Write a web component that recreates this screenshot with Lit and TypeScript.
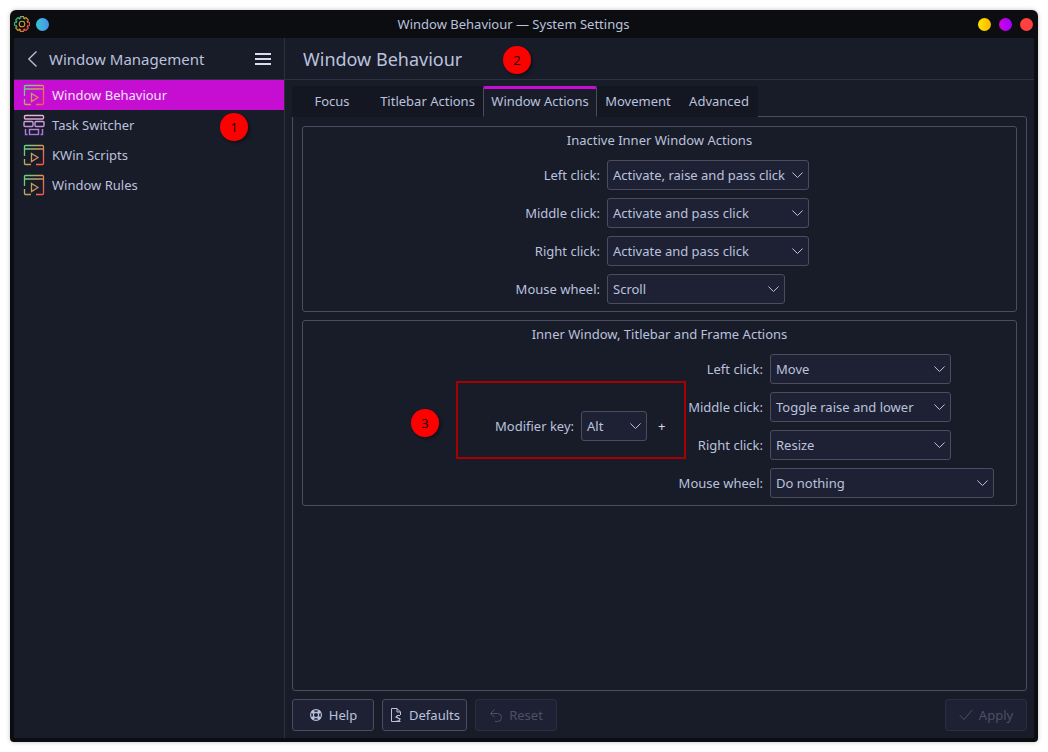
import { LitElement, html, css, svg } from "lit";
import { customElement } from "lit/decorators.js";

const chevron = html`<svg class="chev" width="11" height="6" viewBox="0 0 11 6">
  <path d="M.4.5 5.500 5.500 10.600.5" fill="none" stroke="currentColor" />
</svg>`;

const grads = svg`<defs>
  <linearGradient id="gw" gradientUnits="userSpaceOnUse" x1="0" y1="4" x2="22" y2="18">
    <stop offset="0" stop-color="#58d98c" /><stop offset=".5" stop-color="#c9a060" /><stop offset="1" stop-color="#ff4f4f" />
  </linearGradient>
  <linearGradient id="gs" gradientUnits="userSpaceOnUse" x1="0" y1="0" x2="0" y2="22">
    <stop offset="0" stop-color="#f0b8dc" /><stop offset="1" stop-color="#a070e0" />
  </linearGradient>
  <linearGradient id="gg" gradientUnits="userSpaceOnUse" x1="1" y1="4" x2="15" y2="14">
    <stop offset="0" stop-color="#20c8a0" /><stop offset=".5" stop-color="#e0a020" /><stop offset="1" stop-color="#f03060" />
  </linearGradient>
</defs>`;

const windowIcon = html`<svg width="22" height="22" viewBox="0 0 22 22" fill="none" stroke="url(#gw)" stroke-width="1.300">
  <path d="M1.500 12V2.500a1 1 0 0 1 1-1h17a1 1 0 0 1 1 1V19.500a1 1 0 0 1-1 1H13M1.500 5h19M1.500 15v4.500a1 1 0 0 0 1 1H8" />
  <path d="M8.500 9.500l6.500 4-6.500 4z" />
</svg>`;

const switcherIcon = html`<svg width="22" height="22" viewBox="0 0 22 22" fill="none" stroke="url(#gs)" stroke-width="1.400">
  <rect x="1.500" y="1.500" width="19" height="3.500" rx="1" />
  <rect x="1" y="7.500" width="9" height="5" rx="1" />
  <rect x="12" y="7.500" width="9" height="5" rx="1" />
  <rect x="6.500" y="15.500" width="9" height="5" />
  <path d="M2.500 15v5.500h2M17.500 20.500h2V15" />
</svg>`;

// eight teeth round the middle of a 16px icon
const gearPath = () => {
  const points: string[] = [];
  for (let i = 0; i < 8; i++) {
    const a = (i * Math.PI) / 4;
    for (const [r, d] of [[5.9, -0.42], [7.5, -0.2], [7.5, 0.2], [5.9, 0.42]]) {
      points.push(`${(8 + r * Math.sin(a + d)).toFixed(2)} ${(8 - r * Math.cos(a + d)).toFixed(2)}`);
    }
  }
  return `M${points.join("L")}Z`;
};

const gearIcon = html`<svg width="16" height="16" viewBox="0 0 16 16" fill="none" stroke="url(#gg)" stroke-width="1.100">
  <path d="${gearPath()}" />
  <circle cx="8" cy="8" r="2.800" />
</svg>`;

const helpIcon = html`<svg width="14" height="14" viewBox="0 0 14 14" fill="none" stroke="currentColor" stroke-width="1.200">
  <circle cx="7" cy="7" r="5.400" />
  <circle cx="7" cy="7" r="2.600" />
  <path stroke-width="3" d="M3 3l2 2M11 3 9 5M3 11l2-2M11 11 9 9" />
</svg>`;

const defaultsIcon = html`<svg width="14" height="16" viewBox="0 0 14 16" fill="none" stroke="currentColor">
  <path d="M11.500 8V5L8 1.500H2.500v13h9" />
  <path d="M8 1.500V5h3.500" />
  <path d="M11 8.500H8.500L7 10l4 2-1 2H7.500" stroke-width="1.200" />
</svg>`;

const resetIcon = html`<svg width="14" height="14" viewBox="0 0 14 14" fill="none" stroke="currentColor">
  <path d="M2 5.500h6.500a4 4 0 0 1 0 8H6" />
  <path d="M5.500 1.500l-4 4 4 3.500" />
</svg>`;

const applyIcon = html`<svg width="14" height="12" viewBox="0 0 14 12" fill="none" stroke="currentColor">
  <path d="M.8 6.200 5 10.500 13.200 1" />
</svg>`;

@customElement("app-root")
export class AppRoot extends LitElement {
  private navItem(label: string, icon: unknown, selected = false) {
    return html`<div class="nav-item ${selected ? "selected" : ""}">${icon}<span>${label}</span></div>`;
  }

  private combo(value: string, width: number) {
    return html`<div class="combo" style="width:${width}px"><span>${value}</span>${chevron}</div>`;
  }

  private row(label: string, value: string, width: number) {
    return html`<label>${label}</label>${this.combo(value, width)}`;
  }

  render() {
    return html`
      <svg class="defs" width="0" height="0">${grads}</svg>
      <div class="window">
        <header class="titlebar">
          <div class="tb-left">${gearIcon}<i class="dot pin"></i></div>
          <div class="tb-title">Window Behaviour — System Settings</div>
          <div class="tb-right">
            <i class="dot yellow"></i><i class="dot purple"></i><i class="dot red"></i>
          </div>
        </header>
        <div class="body">
          <aside class="sidebar">
            <div class="side-head">
              <svg width="11" height="18" viewBox="0 0 11 18" fill="none" stroke="currentColor" stroke-width="1.300">
                <path d="M9.500 1.500 1.800 9l7.700 7.500" />
              </svg>
              <span class="side-title">Window Management</span>
              <div class="burger"><i></i><i></i><i></i></div>
            </div>
            <nav>
              ${this.navItem("Window Behaviour", windowIcon, true)}
              ${this.navItem("Task Switcher", switcherIcon)}
              ${this.navItem("KWin Scripts", windowIcon)}
              ${this.navItem("Window Rules", windowIcon)}
            </nav>
          </aside>
          <main class="content">
            <div class="page-head">Window Behaviour</div>
            <div class="page">
              <div class="tabs">
                <div class="tab" style="width:80px">Focus</div>
                <div class="tab" style="width:111px">Titlebar Actions</div>
                <div class="tab active">Window Actions</div>
                <div class="tab" style="width:82px">Movement</div>
                <div class="tab last" style="width:79px">Advanced</div>
              </div>
              <div class="pane">
                <section class="group">
                  <div class="group-title">Inactive Inner Window Actions</div>
                  <div class="form inactive">
                    ${this.row("Left click:", "Activate, raise and pass click", 202)}
                    ${this.row("Middle click:", "Activate and pass click", 202)}
                    ${this.row("Right click:", "Activate and pass click", 202)}
                    ${this.row("Mouse wheel:", "Scroll", 178)}
                  </div>
                </section>
                <section class="group">
                  <div class="group-title">Inner Window, Titlebar and Frame Actions</div>
                  <div class="split">
                    <div class="modifier">
                      <label>Modifier key:</label>
                      ${this.combo("Alt", 66)}
                      <span class="plus">+</span>
                    </div>
                    <div class="form frame">
                      ${this.row("Left click:", "Move", 181)}
                      ${this.row("Middle click:", "Toggle raise and lower", 181)}
                      ${this.row("Right click:", "Resize", 181)}
                      ${this.row("Mouse wheel:", "Do nothing", 224)}
                    </div>
                  </div>
                </section>
              </div>
              <footer class="buttons">
                <button style="width:82px">${helpIcon}Help</button>
                <button style="width:85px">${defaultsIcon}Defaults</button>
                <button class="off" style="width:82px">${resetIcon}Reset</button>
                <button class="off apply" style="width:82px">${applyIcon}Apply</button>
              </footer>
            </div>
          </main>
        </div>
      </div>
      <div class="marker" style="left:220px;top:113px">1</div>
      <div class="marker" style="left:503px;top:46px">2</div>
      <div class="marker" style="left:411px;top:409px">3</div>
      <div class="callout"></div>
    `;
  }

  static styles = css`
    :host {
      display: block;
      position: relative;
      height: 752px;
      background: #fff;
      font: 13px "Noto Sans", sans-serif;
      color: #bac2de;
    }
    .defs { position: absolute; }
    label { white-space: nowrap; }
    .window {
      position: absolute;
      left: 10px;
      top: 10px;
      width: 1028px;
      height: 732px;
      box-sizing: border-box;
      padding: 0 4px 4px;
      display: flex;
      flex-direction: column;
      background: #0c0d11;
      border-radius: 6px 6px 4px 4px;
      box-shadow: 0 0 4px rgba(0, 0, 0, 0.25);
    }
    .titlebar {
      height: 28px;
      flex: none;
      display: flex;
      align-items: center;
      justify-content: space-between;
      position: relative;
      color: #bac2de;
    }
    .tb-left { display: flex; align-items: center; gap: 6px; }
    .tb-title {
      position: absolute;
      left: 0;
      right: 21px;
      text-align: center;
    }
    .tb-right { display: flex; gap: 8px; margin-right: 1px; }
    .dot { display: block; width: 13px; height: 13px; border-radius: 50%; }
    .pin { background: linear-gradient(90deg, #35c8d8, #4a90e8); }
    .yellow { background: linear-gradient(90deg, #ffe600, #ffb400); }
    .purple { background: linear-gradient(90deg, #d000e0, #a400ff); }
    .red { background: #ff4040; }
    .body { flex: 1; display: flex; background: #181b28; min-height: 0; }
    .sidebar { width: 270px; flex: none; border-right: 1px solid #2d3040; }
    .side-head {
      height: 41px;
      display: flex;
      align-items: center;
      padding: 0 13px 0 13px;
      border-bottom: 1px solid #2d3040;
      gap: 11px;
      box-sizing: content-box;
    }
    .side-title { flex: 1; font-size: 15px; }
    .burger { display: flex; flex-direction: column; gap: 3px; }
    .burger i { display: block; width: 16px; height: 2px; background: #d8dcec; }
    .nav-item {
      height: 30px;
      display: flex;
      align-items: center;
      gap: 7px;
      padding-left: 9px;
    }
    .nav-item.selected { background: #c50ed2; color: #f4e4f8; }
    .content { flex: 1; display: flex; flex-direction: column; min-width: 0; }
    .page-head {
      height: 41px;
      line-height: 43px;
      padding-left: 18px;
      font-size: 18px;
      border-bottom: 1px solid #2d3040;
      flex: none;
    }
    .page { flex: 1; display: flex; flex-direction: column; padding: 6px 7px 7px; min-height: 0; }
    .tabs {
      display: flex;
      align-self: flex-start;
      height: 31px;
      background: #141722;
      margin-bottom: -1px;
      position: relative;
      z-index: 1;
    }
    .tab {
      display: flex;
      align-items: center;
      justify-content: center;
      box-sizing: border-box;
      padding-bottom: 1px;
    }
    .tab.last { padding-left: 1px; }
    .tab.active {
      width: 114px;
      background: #181b28;
      border: 1px solid #4a4d5e;
      border-top: 3px solid #c50ed2;
      border-bottom-color: #181b28;
      border-radius: 2px 2px 0 0;
      padding-bottom: 3px;
    }
    .pane {
      flex: 1;
      border: 1px solid #4a4d5e;
      border-radius: 0 3px 3px 3px;
      padding: 9px;
      display: flex;
      flex-direction: column;
      gap: 8px;
    }
    .group {
      height: 186px;
      box-sizing: border-box;
      border: 1px solid #4a4d5e;
      border-radius: 3px;
      display: flex;
      flex-direction: column;
    }
    .group-title { height: 33px; line-height: 27px; text-align: center; }
    .form { display: grid; row-gap: 8px; column-gap: 7px; justify-items: start; align-items: center; }
    .form label { justify-self: end; }
    .inactive { grid-template-columns: 297px auto; }
    .split { display: flex; }
    .frame { grid-template-columns: 84px auto; }
    .modifier {
      margin: 57px 0 0 192px;
      height: 30px;
      width: 184px;
      display: flex;
      align-items: center;
      gap: 7px;
      flex: none;
    }
    .plus { margin-left: 4px; color: #d8dcec; }
    .combo {
      height: 30px;
      box-sizing: border-box;
      background: #1e2133;
      border: 1px solid #4a4d5e;
      border-radius: 3px;
      display: flex;
      align-items: center;
      justify-content: space-between;
      padding: 0 5px 0 5px;
    }
    .chev { color: #bac2de; flex: none; }
    .buttons { display: flex; gap: 8px; padding-top: 8px; }
    button {
      height: 32px;
      box-sizing: border-box;
      background: #1e2133;
      border: 1px solid #4a4d5e;
      border-radius: 3px;
      color: #bac2de;
      font: inherit;
      display: flex;
      align-items: center;
      justify-content: center;
      gap: 6px;
      padding: 0;
    }
    button.off { color: #4b5064; border-color: #2b2e3e; }
    button.apply { margin-left: auto; }
    .marker {
      position: absolute;
      width: 28px;
      height: 28px;
      border-radius: 50%;
      background: #ff0000;
      color: #1a0000;
      text-align: center;
      line-height: 28px;
      box-shadow: 2px 2px 3px rgba(0, 0, 0, 0.35);
    }
    .callout {
      position: absolute;
      left: 456px;
      top: 381px;
      width: 226px;
      height: 74px;
      border: 2px solid #a60000;
    }
  `;
}
